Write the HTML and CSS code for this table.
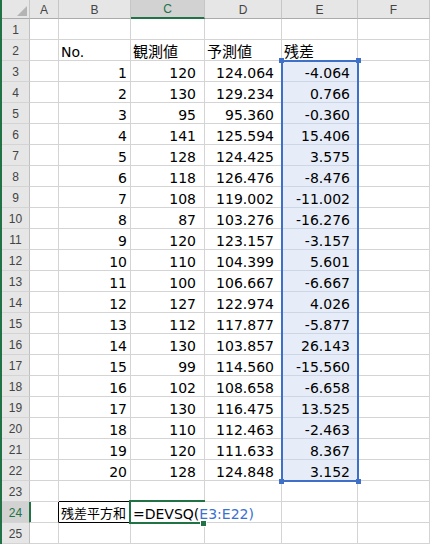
FILE: index.html
```html
<!DOCTYPE html>
<html lang="ja">
<head>
<meta charset="utf-8">
<title>DEVSQ</title>
<link rel="stylesheet" href="styles.css">
</head>
<body>
<div class="sheet">
  <div class="row">
    <div class="corner"></div><div class="ch">A</div><div class="ch">B</div><div class="ch on">C</div><div class="ch">D</div><div class="ch">E</div><div class="ch">F</div>
  </div>
  <div class="row"><div class="rh">1</div><div class="c"></div><div class="c"></div><div class="c"></div><div class="c"></div><div class="c"></div><div class="c"></div></div>
  <div class="row"><div class="rh">2</div><div class="c"></div><div class="c">No.</div><div class="c ja">観測値</div><div class="c ja">予測値</div><div class="c ja">残差</div><div class="c"></div></div>
  <div class="row"><div class="rh">3</div><div class="c"></div><div class="c num">1</div><div class="c num">120</div><div class="c num">124.064</div><div class="c num hl">-4.064</div><div class="c"></div></div>
  <div class="row"><div class="rh">4</div><div class="c"></div><div class="c num">2</div><div class="c num">130</div><div class="c num">129.234</div><div class="c num hl">0.766</div><div class="c"></div></div>
  <div class="row"><div class="rh">5</div><div class="c"></div><div class="c num">3</div><div class="c num">95</div><div class="c num">95.360</div><div class="c num hl">-0.360</div><div class="c"></div></div>
  <div class="row"><div class="rh">6</div><div class="c"></div><div class="c num">4</div><div class="c num">141</div><div class="c num">125.594</div><div class="c num hl">15.406</div><div class="c"></div></div>
  <div class="row"><div class="rh">7</div><div class="c"></div><div class="c num">5</div><div class="c num">128</div><div class="c num">124.425</div><div class="c num hl">3.575</div><div class="c"></div></div>
  <div class="row"><div class="rh">8</div><div class="c"></div><div class="c num">6</div><div class="c num">118</div><div class="c num">126.476</div><div class="c num hl">-8.476</div><div class="c"></div></div>
  <div class="row"><div class="rh">9</div><div class="c"></div><div class="c num">7</div><div class="c num">108</div><div class="c num">119.002</div><div class="c num hl">-11.002</div><div class="c"></div></div>
  <div class="row"><div class="rh">10</div><div class="c"></div><div class="c num">8</div><div class="c num">87</div><div class="c num">103.276</div><div class="c num hl">-16.276</div><div class="c"></div></div>
  <div class="row"><div class="rh">11</div><div class="c"></div><div class="c num">9</div><div class="c num">120</div><div class="c num">123.157</div><div class="c num hl">-3.157</div><div class="c"></div></div>
  <div class="row"><div class="rh">12</div><div class="c"></div><div class="c num">10</div><div class="c num">110</div><div class="c num">104.399</div><div class="c num hl">5.601</div><div class="c"></div></div>
  <div class="row"><div class="rh">13</div><div class="c"></div><div class="c num">11</div><div class="c num">100</div><div class="c num">106.667</div><div class="c num hl">-6.667</div><div class="c"></div></div>
  <div class="row"><div class="rh">14</div><div class="c"></div><div class="c num">12</div><div class="c num">127</div><div class="c num">122.974</div><div class="c num hl">4.026</div><div class="c"></div></div>
  <div class="row"><div class="rh">15</div><div class="c"></div><div class="c num">13</div><div class="c num">112</div><div class="c num">117.877</div><div class="c num hl">-5.877</div><div class="c"></div></div>
  <div class="row"><div class="rh">16</div><div class="c"></div><div class="c num">14</div><div class="c num">130</div><div class="c num">103.857</div><div class="c num hl">26.143</div><div class="c"></div></div>
  <div class="row"><div class="rh">17</div><div class="c"></div><div class="c num">15</div><div class="c num">99</div><div class="c num">114.560</div><div class="c num hl">-15.560</div><div class="c"></div></div>
  <div class="row"><div class="rh">18</div><div class="c"></div><div class="c num">16</div><div class="c num">102</div><div class="c num">108.658</div><div class="c num hl">-6.658</div><div class="c"></div></div>
  <div class="row"><div class="rh">19</div><div class="c"></div><div class="c num">17</div><div class="c num">130</div><div class="c num">116.475</div><div class="c num hl">13.525</div><div class="c"></div></div>
  <div class="row"><div class="rh">20</div><div class="c"></div><div class="c num">18</div><div class="c num">110</div><div class="c num">112.463</div><div class="c num hl">-2.463</div><div class="c"></div></div>
  <div class="row"><div class="rh">21</div><div class="c"></div><div class="c num">19</div><div class="c num">120</div><div class="c num">111.633</div><div class="c num hl">8.367</div><div class="c"></div></div>
  <div class="row"><div class="rh">22</div><div class="c"></div><div class="c num">20</div><div class="c num">128</div><div class="c num">124.848</div><div class="c num hl">3.152</div><div class="c"></div></div>
  <div class="row"><div class="rh">23</div><div class="c"></div><div class="c box-top"></div><div class="c"></div><div class="c"></div><div class="c"></div><div class="c"></div></div>
  <div class="row"><div class="rh on">24</div><div class="c box-left"></div><div class="c boxed ja-s">残差平方和</div><div class="c active">=DEVSQ(<span class="ref">E3:E22)</span></div><div class="c"></div><div class="c"></div><div class="c"></div></div>
  <div class="row"><div class="rh">25</div><div class="c"></div><div class="c"></div><div class="c"></div><div class="c"></div><div class="c"></div><div class="c"></div></div>

  <div class="refbox"><i class="hd tl"></i><i class="hd tr"></i><i class="hd bl"></i><i class="hd br"></i></div>
  <div class="actbox"><i class="fill"></i></div>
</div>
</body>
</html>
```
FILE: styles.css
```css
html, body {
  margin: 0;
  background: #fff;
}

.sheet {
  display: grid;
  grid-template-columns: 28px 29px 72px 74px 77px 76px 72px;
  grid-template-rows: 19px repeat(25, 21px);
  border-left: 2px solid #217346;
  position: relative;
  width: 428px;
  font-family: "DejaVu Sans", "Noto Sans CJK JP", sans-serif;
  color: #000;
}

.row {
  display: contents;
}

.c {
  border-right: 1px solid #d4d4d4;
  border-bottom: 1px solid #d4d4d4;
  padding: 4px 2px 0;
  font-size: 14px;
  line-height: 16px;
  white-space: nowrap;
  min-width: 0;
  text-align: left;
}

.num {
  text-align: right;
}

.row > .num:nth-child(3) { padding-right: 3px; }
.row > .num:nth-child(4) { padding-right: 8px; }
.row > .num:nth-child(5) { padding-right: 7px; }
.row > .num:nth-child(6) { padding-right: 7px; }

.ja {
  font-size: 15px;
}

.ja-s {
  font-size: 13px;
}

.corner,
.ch {
  background: #e6e6e6;
  border-right: 1px solid #c6c6c6;
  border-bottom: 1px solid #ababab;
}

.corner {
  position: relative;
}

.corner::after {
  content: "";
  position: absolute;
  right: 2px;
  bottom: 2px;
  border-style: solid;
  border-width: 0 0 10px 10px;
  border-color: transparent transparent #b4b4b4 transparent;
}

.ch {
  display: flex;
  align-items: center;
  justify-content: center;
  font: 12px/14px "Liberation Sans", sans-serif;
  color: #444;
  padding-top: 1px;
}

.ch.on {
  background: #d2d2d2;
  color: #217346;
  border-bottom: 2px solid #217346;
}

.rh {
  background: #e6e6e6;
  border-right: 1px solid #c0c0c0;
  border-bottom: 1px solid #d4d4d4;
  display: flex;
  justify-content: center;
  align-items: flex-end;
  padding-bottom: 2px;
  font: 12px/14px "Liberation Sans", sans-serif;
  color: #444;
}

.rh.on {
  background: #d2d2d2;
  color: #217346;
  border-right-color: #217346;
  box-shadow: 1px 0 0 #217346;
}

.hl {
  background: #e6edf8;
  border-bottom-color: #cdd6e4;
}

.box-top {
  border-bottom-color: #000;
}

.box-left {
  border-right-color: #000;
}

.boxed {
  border-right-color: #000;
  border-bottom-color: #000;
}

.active {
  border-right-color: transparent;
}

.ref {
  color: #3a70d0;
}

.refbox {
  position: absolute;
  grid-column: 6 / 7;
  grid-row: 4 / 24;
  top: -1px;
  left: -1px;
  right: -1px;
  bottom: -1px;
  border: 2px solid #3f70c8;
}

.hd {
  position: absolute;
  width: 5px;
  height: 5px;
  background: #3f70c8;
}

.hd.tl { left: -4px; top: -4px; }
.hd.tr { right: -4px; top: -4px; }
.hd.bl { left: -4px; bottom: -4px; }
.hd.br { right: -4px; bottom: -4px; }

.actbox {
  position: absolute;
  grid-column: 4 / 5;
  grid-row: 25 / 26;
  top: -2px;
  left: -2px;
  right: 0;
  bottom: -1px;
  border: 2px solid #217346;
  border-right: 0;
}

.fill {
  position: absolute;
  right: -2px;
  bottom: -5px;
  width: 5px;
  height: 5px;
  background: #217346;
  border: 1px solid #fff;
}
```
